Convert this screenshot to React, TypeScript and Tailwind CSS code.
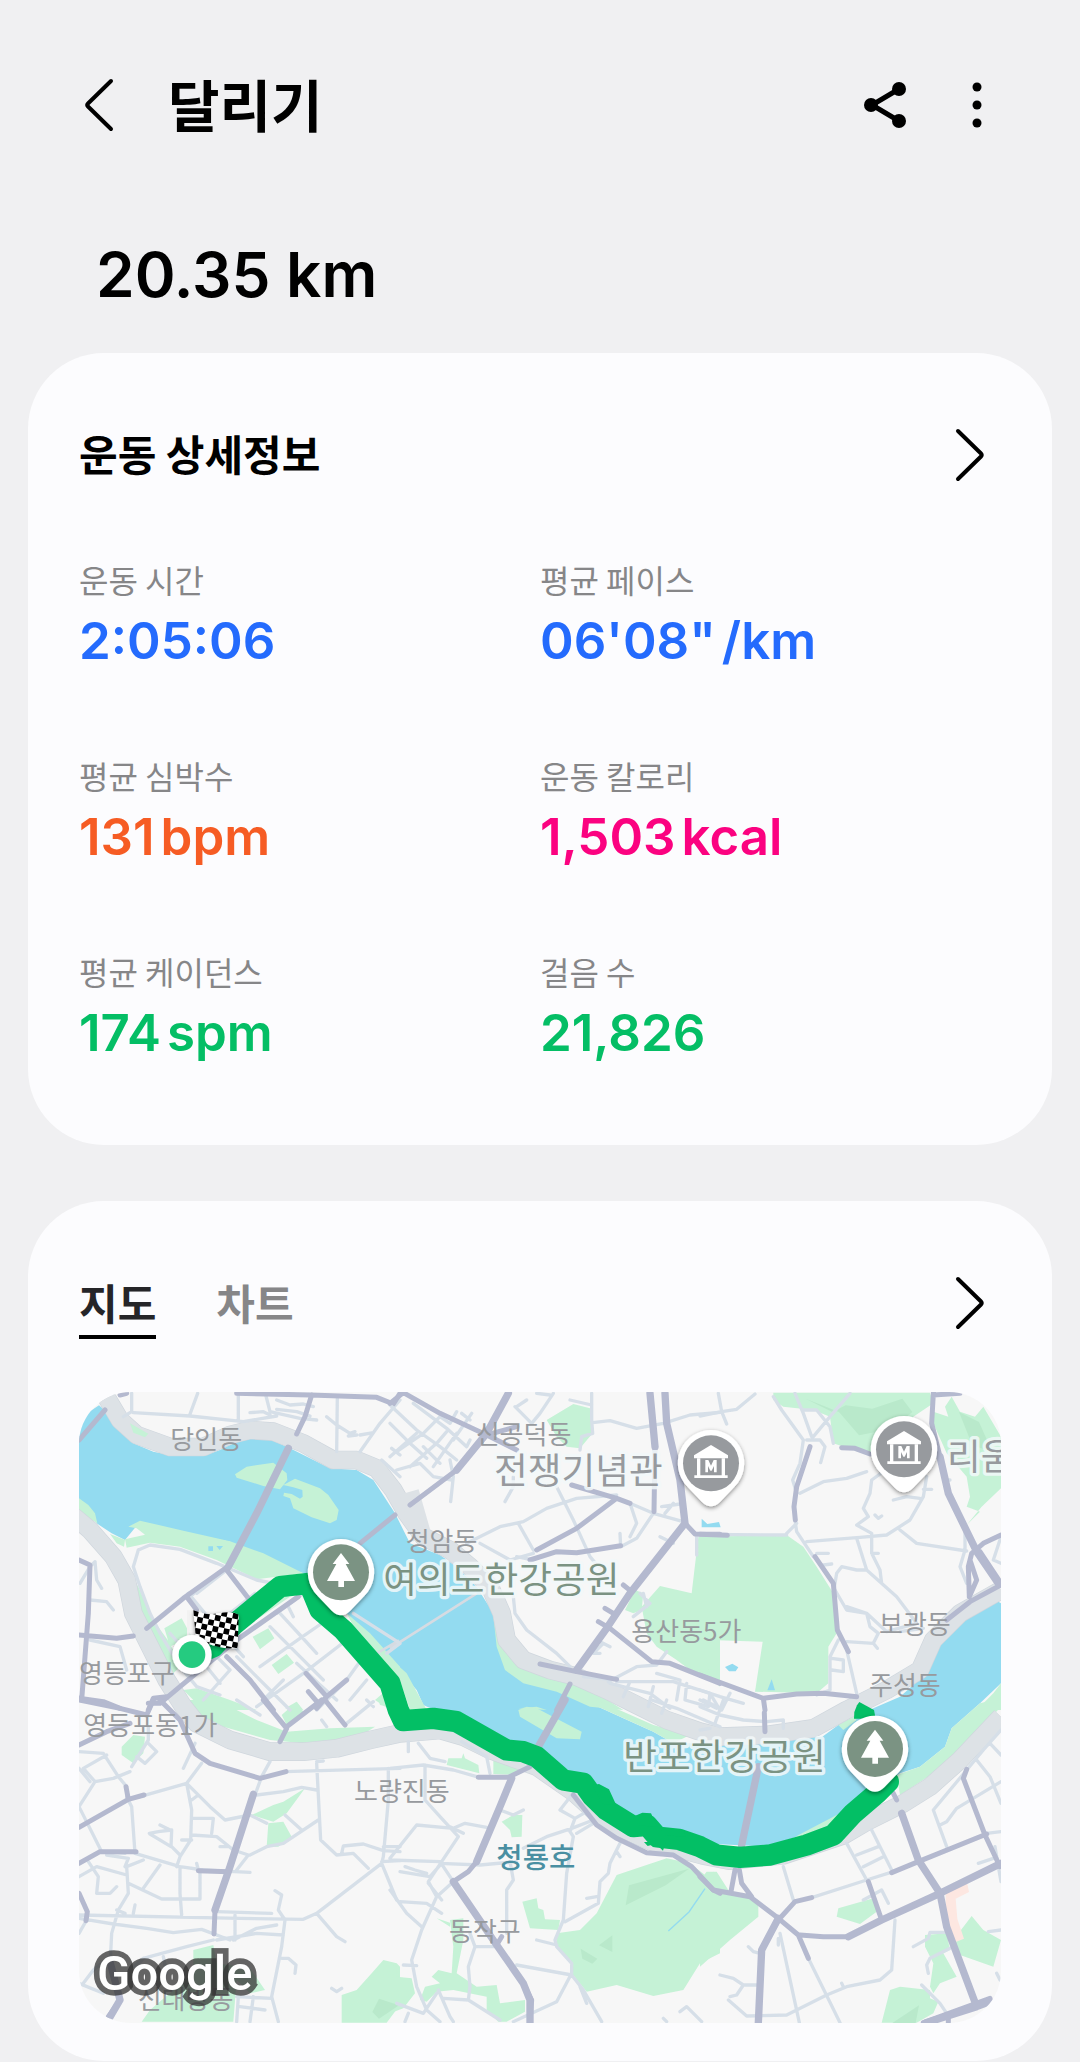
type Stat = { label: string; value: string; unit?: string; color: string };

const stats: Stat[] = [
  { label: "운동 시간", value: "2:05:06", color: "text-[#246bfd]" },
  { label: "평균 페이스", value: "06'08\"", unit: "/km", color: "text-[#246bfd]" },
  { label: "평균 심박수", value: "131", unit: "bpm", color: "text-[#f65c24]" },
  { label: "운동 칼로리", value: "1,503", unit: "kcal", color: "text-[#fb0280]" },
  { label: "평균 케이던스", value: "174", unit: "spm", color: "text-[#04be65]" },
  { label: "걸음 수", value: "21,826", color: "text-[#04be65]" },
];

// Map tiles: x/y is the tile origin, every path is local to its tile
const tiles = [
  {
    x: -27,
    y: -36,
    parks: [
      "M495,283L530,260L610,248L650,280L652,300L630,328L580,318L500,293Z",
      "M640,315L675,296L750,325L775,345L806,390L800,420L780,430L725,412L670,385L660,355L640,348L642,338L665,342L690,356L698,350L697,330L670,322Z",
      "M27,355L55,375L75,400L82,430L27,395Z",
      "M175,440L210,422L340,452L480,484L580,520L700,580L620,590L560,598L440,540L330,500L240,488L170,503L165,478L225,464L200,445Z",
      "M120,462L165,480L162,500L140,490Z",
      "M185,590L205,620L250,720L300,790L330,860L310,880L260,810L215,720L190,640Z",
      "M283,745L335,715L370,780L320,790L300,800Z",
      "M548,770L595,745L613,775L570,808Z",
      "M605,855L650,822L672,848L625,882Z",
      "M470,735L640,645L660,650L500,760Z",
      "M340,930L380,925L480,960L560,990L400,990Z",
      "M830,700L900,760L990,860L990,990L960,990L915,960L950,930Z",
      "M645,985L680,965L700,990Z",
    ],
    minor:
      "M185,40L185,95L160,110M190,98L360,108L520,125L620,108M383,40L358,108M505,40L505,125M588,48L600,95L690,115L740,120M540,98L580,95L600,105M620,60L660,75L700,72L730,80M620,88L680,95L720,108M802,50L800,215M990,60L930,130L870,215M770,110L800,135L840,160L855,155M835,168L860,165M870,165L910,158M965,205L990,225M935,240L990,290M205,510L240,495L330,508L440,550L560,600L620,612M205,510L190,560L210,620L240,700L270,760L330,860L380,920L450,945M30,610L60,560L75,545M75,545L80,600L95,625M60,660L110,665L130,690M60,780L150,800L170,870M355,640L430,730L520,830M420,600L360,650M470,570L380,640M555,640L480,700M630,700L690,765L740,820M620,700L700,640M600,740L690,830L760,900M770,720L690,775L570,860M830,780L700,880L560,980M880,830L830,900L740,990M550,880L600,930L660,990M500,830L560,890M440,830L480,870L400,960M410,860L450,910M640,900L590,950M680,850L740,905L800,960M890,900L840,960M950,820L990,790M850,700L990,790M655,680L670,710M300,760L380,850",
    major:
      "M500,40L720,45L920,52L970,72L990,40M725,45L705,110L680,162M655,205L560,400L480,555L340,655L230,745M975,405L870,490M470,570L535,655M27,180L105,90M150,45L170,40M27,540L60,555L55,700L45,830L35,960M27,765L140,775L190,768M350,650L380,690M685,650L500,780L330,920L270,970L235,970M470,830L540,900L610,990M830,900L770,950L740,985M708,880L770,950M715,935L745,970M27,955L100,965L150,985M235,990L250,955L290,950",
  },
  {
    x: 933,
    y: -36,
    parks: [
      "M470,120L550,72L600,85L608,160L570,205L530,200L500,170Z",
      "M925,470L990,470L990,920L960,890L900,870L860,840L800,800L770,760L755,680L810,618L905,640Z",
      "M735,630L760,640L755,690L730,700L705,690Z",
      "M308,690L330,760L370,840L440,880L520,890L620,940L700,990L600,980L500,935L400,910L345,870L320,800Z",
      "M0,835L50,880L110,990L60,990L30,900Z",
      "M385,985L440,980L470,990Z",
    ],
    minor:
      "M0,75L80,150L150,200L200,240M0,130L60,190L110,235M70,70L170,145L230,200L240,180M20,215L100,160L150,110L180,130L200,95M0,230L80,160M60,260L140,190L170,155M20,270L90,250L130,290L185,300M100,200L150,250M200,160L130,260M245,100L190,180M215,100L240,120M180,240L190,290L182,365M375,80L425,130L450,100L490,40M440,40L480,45M380,80L410,60M605,40L605,120L608,160L575,170L570,210M540,60L605,75M608,128L660,122L740,145L820,130L900,105L990,97M230,490L330,440L400,425L470,385L560,355L680,345M345,365L370,320L370,290M500,320L550,420L600,530L650,590M385,430L430,510M270,490L360,540L430,520M430,540L380,530M690,460L692,500L740,475L790,400M720,370L740,430L720,470M720,370L790,400L880,425M815,380L870,372M825,400L850,370M810,470L850,490M920,470L920,525M750,640L780,670L730,710M770,680L760,640M620,780L660,800M640,790L610,820L630,820M370,650L375,700L410,750L500,820L540,860M655,905L740,860L800,855L830,815M680,905L850,905L960,940L990,990M660,910L780,940L840,985M800,880L870,900L860,960M890,910L885,960L955,980L960,940M720,905L700,950M790,920L775,980M580,890L680,900",
    major:
      "M0,70L40,38L150,100L290,165L380,210M355,38L290,160L200,270L60,375M290,165L380,140M545,315L680,355L720,370M440,510L560,445L680,355M420,540L500,515L560,518L692,497M780,38L795,200L792,395M825,38L830,130L870,300L885,430M885,430L720,640L650,745L560,870M885,430L915,462L990,463M700,615L725,635M645,685L670,700M625,725L660,745L785,845L840,850L990,910M450,852L560,875L680,898M540,912L500,990",
  },
  {
    x: 1863,
    y: -36,
    parks: [
      "M220,38L690,38L700,70L640,110L590,200L520,230L400,190L390,110L340,90L250,80L220,60Z",
      "M755,50L735,80L745,110L700,95L700,130L740,220L800,290L810,350L800,380L840,395L800,435L845,380L903,325L903,170L850,80L825,110L780,95Z",
      "M0,470L260,465L310,500L350,560L400,640L410,760L385,800L385,910L350,940L165,935L188,785L30,780L18,840L32,890L0,885Z",
      "M880,940L903,910L903,990L830,990Z",
    ],
    minor:
      "M55,40L65,95L80,132M0,108L65,95L110,88L165,42M220,50L245,90L310,180L300,250L278,300L290,340M285,40L310,100L335,170M450,40L390,110L340,170M310,90L350,90L390,140L400,190M320,180L360,180L375,200L362,248M260,465L20,463M290,430L260,460M285,420L290,455L340,530M300,340L370,305L440,295L500,275M550,275L515,300L510,340L490,385L505,410L470,435L515,460L515,520L540,570L545,610M320,485L480,472L560,465L630,420L670,350L680,290M580,360L620,350L660,355M670,328L695,328M600,450L650,490L800,513M470,475L500,570L590,650L650,730L560,755L500,700L440,690L405,630M500,570L470,570L425,560L410,580L400,640M440,680L500,700L510,740L535,760L520,790L440,785M520,790L532,805M415,780L390,830L390,930L350,945M395,835L430,840L430,875L395,870M440,810L470,940M350,520L385,520M370,555L395,552M795,455L795,510L780,560L800,610M903,470L880,540L903,550M740,300L750,300M515,520L535,520M600,755L670,745M0,930L60,950L130,970M0,960L50,985M90,940L65,990M525,405L535,415L545,408",
    major:
      "M330,200L290,320L282,380L286,420M425,203L465,205L510,222M700,40L695,130L720,230L745,340L830,515L895,610M700,45L780,40M903,465L850,490L815,520L805,560L808,650M810,540L830,600L808,650M840,515L903,610M903,615L810,665L740,720M345,530L400,610L412,750L445,815M0,463L82,466M0,885L190,955L290,942L370,940L470,950M190,955L195,990",
  },
  {
    x: -27,
    y: 924,
    parks: [
      "M355,0L440,0L560,60L650,95L780,85L915,80L860,115L700,130L600,120L460,80L390,45Z",
      "M635,45L680,5L700,35L650,75Z",
      "M925,0L955,0L955,20L930,15Z",
      "M155,140L190,105L225,110L220,160L190,190L155,165Z",
      "M545,345L610,315L640,305L705,265L650,340L610,365Z",
      "M595,370L640,365L665,410L625,440L590,440Z",
      "M370,750L430,735L440,790L540,805L585,870L540,880L500,840L490,965L215,965L240,930L370,820Z",
      "M815,885L860,870L905,820L940,780L980,790L990,800L990,915L950,968L815,968Z",
    ],
    minor:
      "M27,155L100,160L145,230L170,260M110,165L40,205L75,245L130,235L180,215M75,245L27,320M27,205L60,245M185,200L235,120L235,80M235,130L260,155L225,190L200,170M340,205L375,130M395,190L350,250L210,290M27,320L95,455L165,460M170,290L185,320L195,460L330,500L400,510L540,517M350,250L420,320L465,360L540,345M350,250L365,330L362,420L330,470L320,500M365,355L430,355L425,400M365,300L385,285M365,405L440,410L490,450L535,465L500,510M475,440L450,440M335,420L365,420M238,400L265,395L305,390M270,375L305,392L303,440L240,402M305,440L330,465M540,345L590,370M540,465L590,440L640,430L745,360M645,345L695,390M560,285L640,275L695,262L740,270M740,190L752,420L800,465L850,460L895,505M740,185L760,183M600,185L575,230L555,285M645,215L990,205M955,205L955,300L940,470L935,490L980,600M815,460L820,438L880,432L940,452L990,455M935,485L990,482M990,440L940,440M935,490L740,640L700,658L510,655L27,645M740,640L800,710L825,725M615,572L635,585L625,630L645,660L635,740L605,890L625,965M440,635L605,640M495,645L495,720M27,655L130,672L230,685L310,698L395,688L480,720M440,720L560,700L640,705M490,720L560,685L620,675M430,720L350,740L220,775L190,800M280,770L290,820M220,775L200,800M120,800L125,700L145,630L175,580L170,500L220,480M330,500L330,580L335,645M390,510L390,597L275,597L175,550M270,495L220,565M190,640L195,615M140,630L165,640M27,530L80,500L170,525M55,485L85,530L80,580L120,580L140,560M165,500L175,475L110,465M27,700L50,660M27,850L100,880M40,850L70,810L120,770M635,775L655,775L678,795L675,820M785,865L800,875L815,865M500,890L605,895M510,920L585,930M550,890L540,965M505,890L500,965M755,60L770,80M500,0L570,45M910,5L830,70M890,0L910,20M380,490L385,510",
    major:
      "M27,0L150,25L230,45L250,0M27,135L110,95L180,70M270,0L330,60L375,160L420,190L570,235L648,215M168,260L175,298M27,382L175,298L222,285M27,490L90,455L198,455M550,283L480,500L435,630L432,702M385,512L475,515M580,0L650,85L630,125M650,80L755,0M765,0L825,75M27,580L52,635L48,662M120,785L150,900L115,950",
  },
  {
    x: 933,
    y: 924,
    parks: [
      "M385,30L410,20L440,25L575,95L570,118L500,115L390,50Z",
      "M580,0L620,0L790,75L900,105L850,130L790,95Z",
      "M60,0L90,0L110,30L70,35Z",
      "M175,175L215,175L220,160L225,175L265,195L268,220L170,195Z",
      "M310,180L350,185L420,205L380,225L310,222Z",
      "M335,365L370,345L397,345L395,410L365,412L360,390Z",
      "M397,605L440,595L445,625L460,630L465,658L510,660L505,690L420,685Z",
      "M500,700L570,690L620,640L680,525L830,475L900,490L990,560L990,760L930,790L880,870L790,888L680,855L590,875L545,820L545,790L500,740Z",
      "M945,530L970,515L985,530L990,570Z",
      "M180,660L220,655L220,720L200,820L260,860L320,855L330,910L405,900L405,935L350,965L325,965L290,930L290,890L190,870L140,875L110,905L90,900L105,860L150,850L125,830L145,810L185,820L190,740Z",
      "M0,790L20,800L20,830L65,835L75,880L40,925L0,940Z",
      "M140,655L180,668L180,680Z",
    ],
    minor:
      "M0,205L100,195L190,210L260,230M105,195L105,300L150,350L205,410L115,545L140,590M85,130L120,175L165,185M55,125L55,155M215,125L290,170L300,220M0,475L80,375L190,385L225,370L290,382M180,380L220,400M0,480L150,485L190,545L140,590L95,690L65,780L80,860L110,930L150,965M150,490L270,495L380,485M30,515L120,530L155,490M45,500L75,510L110,520M115,550L155,600M0,570L50,640L95,680M30,605L110,610L155,640M330,330L370,345L400,330M360,485L370,540L350,570L350,700M400,445L470,410L545,385L610,360M545,285L510,330L555,355L540,395L550,410L530,520L520,660L495,720L500,740L545,790L545,820L500,905L370,965M555,355L590,335M560,400L610,370M690,430L660,490L655,520L630,545L625,610L525,665M680,455L690,470M590,595L620,590M380,795L545,825L580,870L635,965M570,860L590,910M440,720L500,735M240,700L255,740L320,740M255,740L235,800L240,860L235,900M160,895L235,900L330,960M145,870L180,950L190,965M140,880L100,940L20,910M40,795L80,797M45,965L55,940M870,935L890,920L935,965M820,955L830,965M785,0L860,25L990,80M830,0L815,40M940,0L990,25",
    major:
      "M525,0L445,140M265,232L355,232L420,200M365,235L330,320L260,485L235,515L190,545L260,650L320,735L400,850L425,900L420,965M335,710L320,735M550,285L620,375L680,415L770,458L850,465L905,500L970,570L990,580",
  },
  {
    x: 1863,
    y: 924,
    parks: [
      "M840,10L880,0L903,0L903,20L800,130L700,220L600,285L590,225L660,200L735,140L755,85Z",
      "M290,408L420,340L400,385L280,420Z",
      "M415,75L460,50L470,60L430,90Z",
      "M20,515L50,515L85,570L175,600L175,650L90,720L0,800L0,540Z",
      "M415,625L520,595L530,635L480,672L410,650Z",
      "M815,648L850,690L903,720L880,800L780,765L760,720Z",
      "M675,705L740,700L750,750L730,760L770,830L720,850L700,880L690,860L700,790L675,740Z",
      "M570,870L600,860L690,870L690,895L715,905L700,940L650,968L545,968Z",
    ],
    minor:
      "M0,20L60,45L130,60L200,65L250,60L250,85M70,0L45,70M0,90L30,85M903,90L850,150L700,330L740,440M870,130L903,165M830,180L870,230L903,310M903,245L770,325L740,365L720,375M440,430L500,540M515,390L575,510M470,465L535,440M490,500L550,470M250,500L280,600M335,593L500,540L580,515M490,600L545,570L565,610M860,400L903,395M835,490L880,475M240,700L298,968M325,775L420,968M235,735L235,715M145,740L160,755L180,760M60,825L100,835L130,855L175,855M90,890L110,885L130,855M85,900L140,948L260,945L380,885L440,860L540,840L575,810L585,660M425,850L430,860M640,740L685,715L690,697L735,697M750,745L690,775L680,795L685,820M665,855L720,910L740,940M865,695L903,690M885,440L903,545M890,820L900,840",
    major:
      "M193,38L195,95M580,280L590,300M800,208L790,235L855,405L900,500M605,340L655,480L720,580M575,518L655,485L860,402M505,545L545,660M903,490L720,580L545,660L445,710L370,710L300,705M720,580L740,680L830,920M870,895L670,968M745,945L745,968M0,530L40,570L150,590L235,655L295,705L325,775M105,510L92,580M118,510L125,550L155,590M335,593L285,605L235,660L185,750L175,968",
  },
];

const placeLabels = [
  { text: "당인동", x: 274, y: 170 },
  { text: "신공덕동", x: 1190, y: 157 },
  { text: "청암동", x: 980, y: 477 },
  { text: "용산동5가", x: 1657, y: 748 },
  { text: "보광동", x: 2400, y: 727 },
  { text: "주성동", x: 2370, y: 909 },
  { text: "영등포구", x: 0, y: 872 },
  { text: "영등포동1가", x: 13, y: 1029 },
  { text: "노량진동", x: 825, y: 1227 },
  { text: "동작구", x: 1110, y: 1648 },
  { text: "신대방동", x: 176, y: 1852 },
];

const poiLabels = [
  { text: "전쟁기념관", x: 1245, y: 276, color: "#979a9e" },
  { text: "리움", x: 2604, y: 234, color: "#979a9e" },
  { text: "여의도한강공원", x: 913, y: 604, color: "#7b9383" },
  { text: "반포한강공원", x: 1633, y: 1134, color: "#7b9383" },
];

const pins = [
  { kind: "museum", x: 1896, y: 214 },
  { kind: "museum", x: 2475, y: 172 },
  { kind: "park", x: 786, y: 541 },
  { kind: "park", x: 2388, y: 1071 },
];

function ChevronRight() {
  return (
    <svg className="h-[60px] w-10" viewBox="0 0 40 60" fill="none" stroke="#000" strokeWidth="4" strokeLinecap="round" strokeLinejoin="round" aria-hidden="true">
      <path d="M9 6L32 28.5Q33.500 30 32 31.500L9 54" />
    </svg>
  );
}

function Pin({ kind, x, y }: { kind: string; x: number; y: number }) {
  return (
    <g transform={`translate(${x} ${y})`}>
      <path
        d="M0 -100A100 100 0 0 1 72 69L28 115Q0 142 -28 115L-72 69A100 100 0 0 1 0 -100Z"
        fill="#fff"
        filter="url(#pinShadow)"
      />
      <circle r="84" fill={kind === "park" ? "#7b9383" : "#979a9e"} />
      {kind === "park" ? (
        <path d="M0 -58L25 -25H14L42 26H9V44H-8V26H-42L-14 -25H-25Z" fill="#fff" />
      ) : (
        <g fill="#fff">
          <path d="M0 -55L51 -24V-15H-51V-24Z" />
          <path d="M-42 -15H-32V36H-42ZM32 -15H42V36H32ZM-50 36H50V44H-50Z" />
          <path d="M-17 27V-10H-8L0 7L8 -10H17V27H9V8L2 22H-2L-9 8V27Z" />
        </g>
      )}
    </g>
  );
}

function RouteMap() {
  return (
    <svg
      className="block h-auto w-full rounded-[52px]"
      viewBox="0 0 2766 1893"
      role="img"
      aria-label="달리기 경로 지도"
      fontFamily="'Noto Sans CJK KR', sans-serif"
    >
      <defs>
        <filter id="pinShadow" x="-30%" y="-30%" width="160%" height="160%">
          <feDropShadow dx="0" dy="5" stdDeviation="6" floodOpacity="0.45" />
        </filter>
        <pattern id="checker" width="34" height="34" patternUnits="userSpaceOnUse" patternTransform="translate(343 654) rotate(12)">
          <rect width="34" height="34" fill="#fff" />
          <path d="M0 0H17V34H34V17H0Z" fill="#000" />
        </pattern>
      </defs>

      <rect width="2766" height="1893" fill="#f7f7f7" />

      {/* Han river */}
      <path
        d="M0,80L60,40L93,69L123,114L163,154L223,179L273,189L373,192L423,174L493,139L573,142L633,169L753,229L833,234L883,264L948,364L993,454L1083,489L1133,524L1193,584L1243,664L1258,754L1283,814L1353,854L1433,869L1513,924L1633,979L1723,1019L1783,1054L1923,1054L2230,1034L2278,999L2383,949L2463,914L2543,844L2573,764L2643,684L2753,626L2766,634V874L2703,934L2618,1009L2598,1064L2523,1124L2463,1144L2343,1244L2283,1269L2153,1334L2063,1364L1863,1354L1683,1294L1573,1244L1523,1164L1373,1084L1283,1054L1133,984L1033,939L1013,894L933,804L803,664L673,544L553,504L453,449L303,419L183,389L138,444L98,424L53,394L33,354L0,324Z"
        fill="#93dbf0"
      />

      {tiles.map((t) => (
        <path key={`p${t.x},${t.y}`} transform={`translate(${t.x} ${t.y})`} d={t.parks.join("")} fill="#c5f2d6" />
      ))}

      {/* darker hills inside the parks */}
      <g fill="#b9e9cb">
        <path d="M2180,20L2260,60L2300,40L2380,50L2470,20L2500,60L2440,110L2340,130L2280,60Z" />
        <path d="M2640,60L2700,90L2740,180L2680,160Z" />
        <path d="M1650,1480L1830,1430L1760,1480L1640,1540Z" />
        <path d="M1560,1660L1600,1630V1680ZM1505,1670L1555,1700L1540,1715L1510,1700Z" />
        <path d="M880,1860L900,1820L960,1840L900,1880ZM2440,1893L2520,1840L2510,1893Z" />
      </g>
      <path d="M2600,1490L2665,1475L2670,1500L2630,1520L2635,1580L2655,1640L2630,1650L2600,1570Z" fill="#fde7e1" />
      <path d="M388,463h14v14h-14ZM412,462h20l-10,12ZM1868,380L1885,396L1920,390L1925,406H1868ZM1938,825L1960,815L1978,826L1970,838H1950ZM2065,895L2078,862L2088,895Z" fill="#93dbf0" />
      <path d="M1768,1617L1830,1560L1878,1490" fill="none" stroke="#93dbf0" strokeWidth="4" />

      {/* river-side expressways */}
      <g fill="none" strokeLinejoin="round">
        {["#cfd6dd", "#dde2e6"].map((stroke, i) => (
          <g key={stroke} stroke={stroke} strokeWidth={i === 0 ? 56 : 52}>
            <path d="M73,0L123,84L173,129L273,165L373,165L453,129L513,114L583,119L673,154L763,204L833,204L893,229L943,294L983,364L1033,434L1113,474L1173,524L1233,584L1268,664L1283,744L1333,804L1413,834L1493,854L1583,894L1663,934L1763,984L1863,1019L1923,1034L2063,1029L2203,1009L2303,954L2423,894L2523,834L2563,744L2643,664L2766,594" />
            <path d="M-27,364L33,414L103,494L143,564L163,664L213,764L263,864L313,944L353,994L453,1044L573,1079L673,1079L773,1069L873,1044L963,1024L1083,1014L1153,1034L1233,1074L1373,1124L1483,1200L1583,1290L1720,1350L1870,1390L1950,1406L2113,1390L2293,1330L2363,1289L2473,1234L2553,1184L2643,1104L2766,974" />
          </g>
        ))}
        <path d="M990,300L1030,440" stroke="#dde2e6" strokeWidth="60" />
        <path d="M933,769L1193,604M893,784L960,745" stroke="#d6dbe2" strokeWidth="8" />
      </g>
      <path d="M153,94L208,125L198,136L163,122Z" fill="#c5f2d6" />

      {tiles.map((t) => (
        <g key={`r${t.x},${t.y}`} transform={`translate(${t.x} ${t.y})`} fill="none" strokeLinecap="round" strokeLinejoin="round">
          <path d={t.minor} stroke="#d6dfe8" strokeWidth="10" />
          <path d={t.major} stroke="#b4b9cf" strokeWidth="15" />
        </g>
      ))}

      {/* wide trunk roads */}
      <g fill="none" stroke="#b4b9cf" strokeWidth="22" strokeLinecap="round" strokeLinejoin="round">
        <path d="M1758,4L1763,94L1803,264L1818,394L1653,604L1583,709L1493,834" />
        <path d="M1713,4L1728,164" />
        <path d="M1288,4L1223,124L1133,234" />
        <path d="M2038,1124L1988,1359" />
        <path d="M1458,924L1378,1064" />
        <path d="M628,169L533,364L448,524" />
        <path d="M2583,194L2608,304L2693,479L2758,574" />
        <path d="M2468,1264L2518,1404L2583,1504L2766,1414" />
        <path d="M2583,1504L2603,1604L2693,1844L2733,1829M2693,1844L2540,1893" />
        <path d="M2583,1504L2408,1584L2308,1634" />
        <path d="M2098,1579L2048,1674L2038,1893" />
        <path d="M523,1207L453,1424L408,1554" />
        <path d="M93,1709L123,1824L88,1884" />
        <path d="M1298,1159L1263,1244L1193,1409" />
        <path d="M1123,1469L1253,1659L1333,1774L1353,1824V1893" />
      </g>

      <g fill="#979a9e" fontSize="78">
        {placeLabels.map((l) => (
          <text key={l.text} x={l.x} y={l.y}>
            {l.text}
          </text>
        ))}
        <text x="1252" y="1427" fontSize="86" fontWeight="500" fill="#4a8fa2">
          청룡호
        </text>
      </g>

      {/* recorded route */}
      <path
        d="M343,790L403,764L463,699L603,584L690,574L723,654L793,714L933,874L958,954L973,986L1063,979L1133,989L1283,1074L1333,1079L1373,1094L1453,1164L1513,1174L1540,1212L1583,1254L1663,1304L1705,1300L1735,1335L1800,1342L1863,1364L1913,1389L1983,1396L2073,1389L2183,1359L2263,1329L2323,1264L2393,1204L2428,1169"
        fill="none"
        stroke="#03bf65"
        strokeWidth="64"
        strokeLinejoin="round"
        strokeLinecap="round"
      />
      <path d="M2341,930L2385,954L2390,980L2325,980L2326,960L2334,940Z" fill="#03bf65" />
      <path d="M1540,1180L1560,1176L1590,1192L1612,1240L1570,1235ZM1660,1275L1690,1262L1716,1264L1735,1305L1680,1300ZM1740,1308L1815,1315L1820,1335L1760,1330ZM1695,1350L1706,1362L1730,1355L1752,1376L1760,1350Z" fill="#03bf65" />

      {/* finish flag and start point */}
      <path d="M328,655V750" stroke="#f2f2f2" strokeWidth="8" />
      <path d="M343,654Q380,672 420,664T479,668L476,768Q440,772 400,760T350,730Z" fill="url(#checker)" filter="url(#pinShadow)" />
      <circle cx="339" cy="788" r="59" fill="#fff" filter="url(#pinShadow)" />
      <circle cx="339" cy="788" r="40" fill="#25cb80" />

      <g fontSize="110" stroke="#f3f9fa" strokeOpacity="0.85" strokeWidth="20" strokeLinejoin="round" paintOrder="stroke">
        {poiLabels.map((l) => (
          <text key={l.text} x={l.x} y={l.y} fill={l.color}>
            {l.text}
          </text>
        ))}
      </g>

      {pins.map((p) => (
        <Pin key={`${p.x},${p.y}`} {...p} />
      ))}

      <text
        x="54"
        y="1794"
        fontSize="147"
        fontWeight="500"
        fontFamily="Roboto, sans-serif"
        fill="#fff"
        stroke="#333"
        strokeOpacity="0.75"
        strokeWidth="34"
        paintOrder="stroke"
      >
        Google
      </text>
    </svg>
  );
}

export default function App() {
  return (
    <div className="min-h-screen bg-[#f0f0f2] pb-px font-['Noto_Sans_CJK_KR',sans-serif] text-black">
      <header className="flex h-[145px] items-center pt-[65px] pr-[71px] pl-[72px]">
        <button type="button" aria-label="뒤로" className="h-20 w-14">
          <svg viewBox="0 0 56 80" className="h-20 w-14" fill="none" stroke="#000" strokeWidth="4" strokeLinecap="round" strokeLinejoin="round">
            <path d="M39 16L16 38.500Q14.500 40 16 41.500L39 64" />
          </svg>
        </button>
        <h1 className="ml-10 flex-1 pb-1 text-[56px] leading-[76px] font-bold">달리기</h1>
        <button type="button" aria-label="공유" className="h-20 w-16">
          <svg viewBox="0 0 64 80" className="h-20 w-16" fill="#000">
            <path d="M46 24L19 40L46 56" fill="none" stroke="#000" strokeWidth="5" />
            <circle cx="46" cy="24" r="7" />
            <circle cx="18" cy="40" r="7" />
            <circle cx="46" cy="56" r="7" />
          </svg>
        </button>
        <button type="button" aria-label="더보기" className="ml-7 h-20 w-16">
          <svg viewBox="0 0 64 80" className="h-20 w-16" fill="#000">
            <circle cx="32" cy="22" r="4.500" />
            <circle cx="32" cy="40" r="4.500" />
            <circle cx="32" cy="58" r="4.500" />
          </svg>
        </button>
      </header>

      <p className="mt-[90px] px-24 font-[Inter,sans-serif] text-[62px] leading-[80px] font-semibold">20.35 km</p>

      <section className="mx-7 mt-[38px] rounded-[76px] bg-[#fcfcfe] px-[51px] pt-[72px] pb-[82px]">
        <div className="flex items-center justify-between">
          <h2 className="pb-1 text-[42px] leading-[56px] font-bold">운동 상세정보</h2>
          <button type="button" aria-label="운동 상세정보 보기" className="mr-3">
            <ChevronRight />
          </button>
        </div>
        <dl className="mt-[74px] grid grid-cols-2 gap-y-[84px]">
          {stats.map((stat) => (
            <div key={stat.label}>
              <dt className="text-[32px] leading-[40px] text-[#868688]">{stat.label}</dt>
              <dd className={`mt-3 flex gap-1.5 font-[Inter,sans-serif] text-[51px] leading-[60px] font-semibold ${stat.color}`}>
                <span>{stat.value}</span>
                {stat.unit && <span>{stat.unit}</span>}
              </dd>
            </div>
          ))}
        </dl>
      </section>

      <section className="mx-7 mt-14 rounded-[76px] bg-[#fcfcfe] px-[51px] pt-[72px] pb-[38px]">
        <div className="flex items-start justify-between">
          <div role="tablist" className="flex gap-[60px] text-[42px] leading-[58px] font-bold">
            <button type="button" role="tab" aria-selected="true" className="border-b-4 border-black pb-1 text-[#252528]">
              지도
            </button>
            <button type="button" role="tab" aria-selected="false" className="border-b-4 border-transparent pb-1 text-[#868688]">
              차트
            </button>
          </div>
          <button type="button" aria-label="지도 크게 보기" className="mr-3">
            <ChevronRight />
          </button>
        </div>
        <div className="mt-[53px]">
          <RouteMap />
        </div>
      </section>
    </div>
  );
}
